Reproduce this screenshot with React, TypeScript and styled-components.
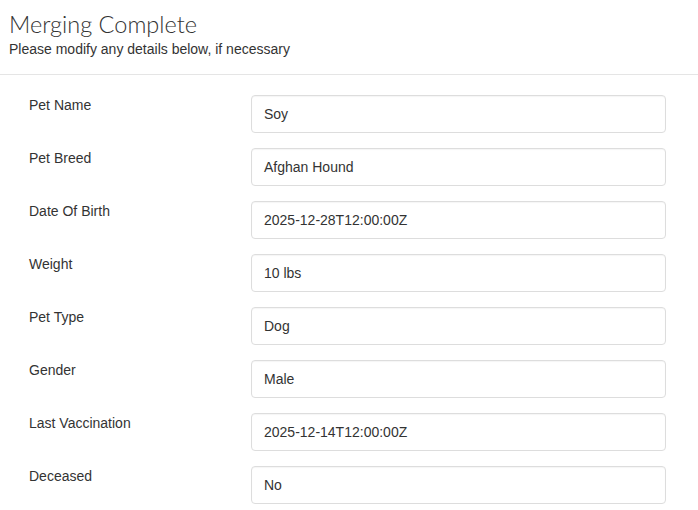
import React from "react";
import styled, { createGlobalStyle } from "styled-components";

const Global = createGlobalStyle`
  html, body { margin: 0; padding: 0; background: #fff; }
  body { font-family: "Liberation Sans", Arial, sans-serif; color: #333; }
`;

const Page = styled.div`
  width: 698px;
  height: 510px;
  overflow: hidden;
  background: #fff;
`;

const Header = styled.header`
  padding: 9px 9px 0 9px;
  height: 75px;
  box-sizing: border-box;
  border-bottom: 1px solid #e5e5e5;
`;

const Title = styled.h1`
  margin: 0;
  font-family: Lato, "Liberation Sans", sans-serif;
  font-weight: 300;
  font-size: 23.5px;
  line-height: 30px;
  color: #333;
`;

const Subtitle = styled.p`
  margin: 2px 0 0 0;
  font-size: 14px;
  line-height: 17px;
  color: #333;
`;

const Form = styled.div`
  display: grid;
  grid-template-columns: 222px 415px;
  row-gap: 15px;
  padding: 20px 0 0 29px;
`;

const Label = styled.label`
  font-size: 14px;
  line-height: 20px;
  color: #333;
`;

const Field = styled.div`
  height: 38px;
  box-sizing: border-box;
  border: 1px solid #ddd;
  border-radius: 4px;
  padding: 0 12px;
  display: flex;
  align-items: center;
  font-size: 14px;
  color: #333;
  box-shadow: inset 0 1px 1px rgba(0, 0, 0, 0.04);
`;

const rows: [string, string][] = [
  ["Pet Name", "Soy"],
  ["Pet Breed", "Afghan Hound"],
  ["Date Of Birth", "2025-12-28T12:00:00Z"],
  ["Weight", "10 lbs"],
  ["Pet Type", "Dog"],
  ["Gender", "Male"],
  ["Last Vaccination", "2025-12-14T12:00:00Z"],
  ["Deceased", "No"],
];

export default function App() {
  return (
    <Page>
      <Global />
      <Header>
        <Title>Merging Complete</Title>
        <Subtitle>Please modify any details below, if necessary</Subtitle>
      </Header>
      <Form>
        {rows.map(([l, v]) => (
          <React.Fragment key={l}>
            <Label>{l}</Label>
            <Field>{v}</Field>
          </React.Fragment>
        ))}
      </Form>
    </Page>
  );
}
